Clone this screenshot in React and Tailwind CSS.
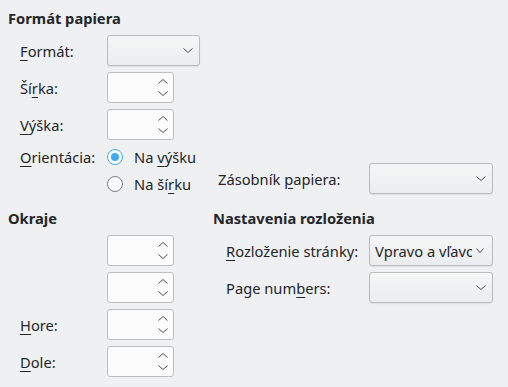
import React from "react";

function Chevron({ up = false, className = "h-[5px] w-[10px]" }) {
  return (
    <svg viewBox="0 0 10 5" preserveAspectRatio="none" className={className} aria-hidden="true">
      <path
        d={up ? "M0.5 4.5 L5 0.5 L9.5 4.5" : "M0.5 0.5 L5 4.5 L9.5 0.5"}
        fill="none"
        stroke="#4d4f51"
        strokeWidth="1"
        vectorEffect="non-scaling-stroke"
      />
    </svg>
  );
}

function Mn({ children }) {
  return <span className="underline decoration-1 underline-offset-[3px]">{children}</span>;
}

function Combo({ width, value }) {
  return (
    <div
      className={`flex h-[31px] ${width} shrink-0 items-center rounded-[3px] border border-[#b9bbbd] bg-gradient-to-b from-[#f5f6f6] to-[#ebeced] pl-[5px] pr-[6px] shadow-[0_1px_1px_rgba(0,0,0,0.08)]`}
    >
      {value ? (
        <>
          <span className="w-[97px] shrink-0 overflow-hidden whitespace-nowrap">{value}</span>
          <Chevron className="ml-[4px] h-[5px] w-[8px]" />
        </>
      ) : (
        <>
          <span className="flex-1" />
          <Chevron />
        </>
      )}
    </div>
  );
}

function Spin() {
  return (
    <div className="flex h-[31px] w-[67px] shrink-0 items-center justify-end rounded-[3px] border border-[#bcbebf] bg-[#fcfcfc] pr-[5px]">
      <div className="flex flex-col gap-[7px]">
        <Chevron up />
        <Chevron />
      </div>
    </div>
  );
}

function Radio({ checked, children }) {
  return (
    <div className="flex h-[27px] items-center gap-[11px]">
      {checked ? (
        <span className="grid h-4 w-4 place-items-center rounded-full border border-[#3daee9] bg-[#fcfcfc]">
          <span className="h-2 w-2 rounded-full bg-[#3daee9]" />
        </span>
      ) : (
        <span className="h-4 w-4 rounded-full border border-[#7a7c7e] bg-[#fcfcfc]" />
      )}
      <span>{children}</span>
    </div>
  );
}

function Row({ label, labelWidth = "w-[87px]", children }) {
  return (
    <div className="flex h-[31px] items-center">
      <span className={`${labelWidth} shrink-0`}>{label}</span>
      {children}
    </div>
  );
}

export default function App() {
  return (
    <div
      className="h-[387px] w-[508px] overflow-hidden bg-[#eff0f1] pt-2 text-[14.7px] leading-5 text-[#232629]"
      style={{ fontFamily: '"Noto Sans", sans-serif' }}
    >
      <div className="pl-2 font-bold">Formát papiera</div>

      <div className="mt-[7px] flex flex-col gap-[6px] pl-5">
        <Row label={<><Mn>F</Mn>ormát:</>}>
          <Combo width="w-[93px]" />
        </Row>
        <Row label={<>Ší<Mn>r</Mn>ka:</>}>
          <Spin />
        </Row>
        <Row label={<><Mn>V</Mn>ýška:</>}>
          <Spin />
        </Row>
      </div>

      <div className="mt-[3px] flex pl-5">
        <span className="flex h-[27px] w-[87px] shrink-0 items-center">
          <span><Mn>O</Mn>rientácia:</span>
        </span>
        <div className="flex w-[111px] shrink-0 flex-col">
          <Radio checked>Na <Mn>v</Mn>ýšku</Radio>
          <Radio>Na ší<Mn>r</Mn>ku</Radio>
        </div>
        <div className="mb-[3px] flex items-center self-end">
          <span className="w-[151px] shrink-0">Zásobník <Mn>p</Mn>apiera:</span>
          <Combo width="w-[124px]" />
        </div>
      </div>

      <div className="mt-[11px] flex">
        <div className="w-[213px] shrink-0 pl-2">
          <div className="font-bold">Okraje</div>
          <div className="mt-[7px] flex flex-col gap-[6px] pl-3">
            <Row label="">
              <Spin />
            </Row>
            <Row label="">
              <Spin />
            </Row>
            <Row label={<><Mn>H</Mn>ore:</>}>
              <Spin />
            </Row>
            <Row label={<><Mn>D</Mn>ole:</>}>
              <Spin />
            </Row>
          </div>
        </div>
        <div className="flex-1">
          <div className="font-bold">Nastavenia rozloženia</div>
          <div className="mt-[7px] flex flex-col gap-[6px] pl-[13px]">
            <Row label={<><Mn>R</Mn>ozloženie stránky:</>} labelWidth="w-[143px]">
              <Combo width="w-[124px]" value="Vpravo a vľavo" />
            </Row>
            <Row label={<>Page num<Mn>b</Mn>ers:</>} labelWidth="w-[143px]">
              <Combo width="w-[124px]" />
            </Row>
          </div>
        </div>
      </div>
    </div>
  );
}
